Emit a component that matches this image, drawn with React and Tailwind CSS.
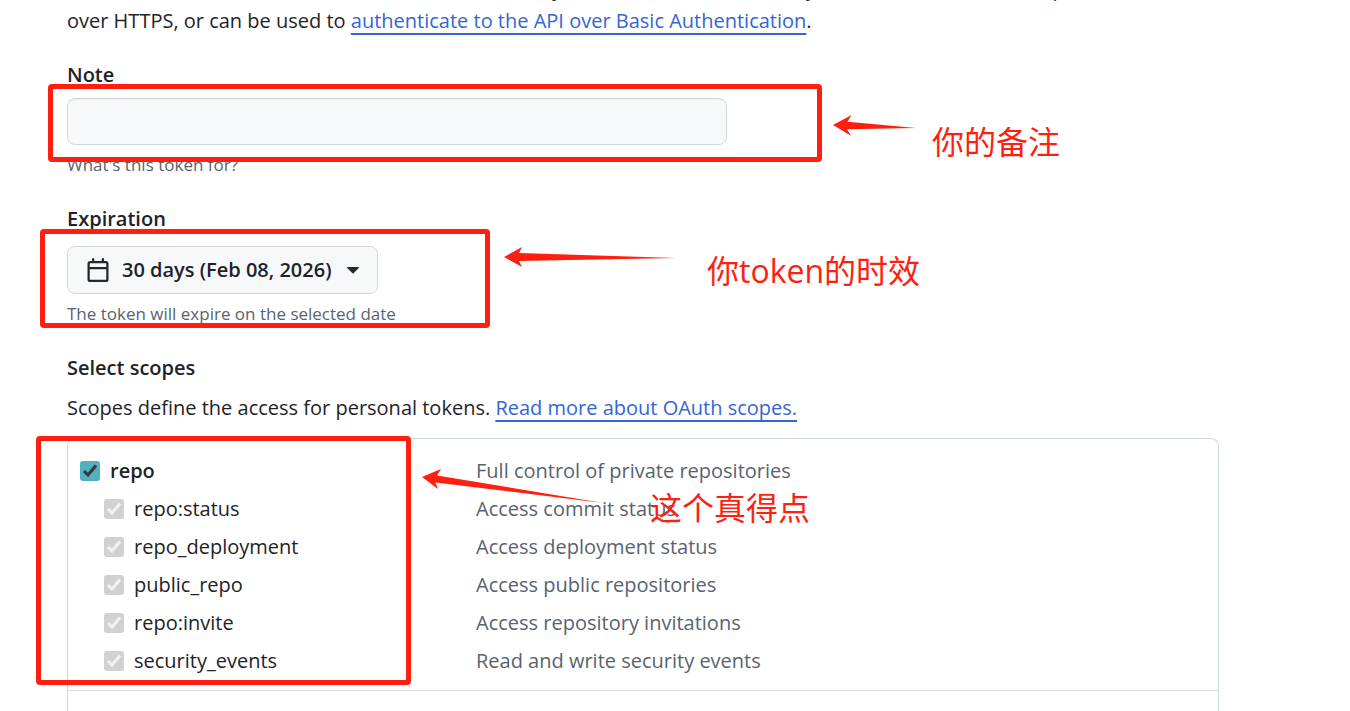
import React from "react";

const CHILD_SCOPES = [
  ["repo:status", "Access commit status"],
  ["repo_deployment", "Access deployment status"],
  ["public_repo", "Access public repositories"],
  ["repo:invite", "Access repository invitations"],
  ["security_events", "Read and write security events"],
];

function CheckBox({ id, disabled }) {
  return (
    <span className="grid size-5 shrink-0 place-items-center">
      <input
        id={id}
        type="checkbox"
        defaultChecked
        disabled={disabled}
        className="col-start-1 row-start-1 size-5 appearance-none rounded-[3px] bg-[#52b1c0] disabled:bg-[#d1d1d1]"
      />
      <svg
        viewBox="0 0 20 20"
        aria-hidden="true"
        className={
          disabled
            ? "pointer-events-none col-start-1 row-start-1 size-5 text-[#f2f2f2]"
            : "pointer-events-none col-start-1 row-start-1 size-5 text-[#393939]"
        }
      >
        <path d="M4 10 8 14 16 4.400" fill="none" stroke="currentColor" strokeWidth="3.100" />
      </svg>
    </span>
  );
}

function ScopeRow({ name, description, child }) {
  return (
    <li className="flex h-[38px] items-center">
      <div className={child ? "flex w-[396px] items-center gap-[10px] pl-6" : "flex w-[396px] items-center gap-[10px]"}>
        <CheckBox id={name} disabled={child} />
        <label htmlFor={name} className={child ? "" : "font-semibold"}>
          {name}
        </label>
      </div>
      <span className="text-[#59636e]">{description}</span>
    </li>
  );
}

function Link({ children }) {
  return (
    <a href="#docs" className="text-[#3465d6] underline decoration-2 underline-offset-[5px] [text-decoration-skip-ink:none]">
      {children}
    </a>
  );
}

function Highlight({ className }) {
  return <div className={"pointer-events-none absolute rounded-[4px] border-[5px] border-[#ff1f10] " + className} />;
}

function Annotation({ className, children }) {
  return (
    <p className={"pointer-events-none absolute text-[32px] leading-10 whitespace-nowrap text-[#ff1f10] " + className}>
      {children}
    </p>
  );
}

export default function App() {
  return (
    <main className="relative flex min-h-screen flex-col overflow-hidden bg-white pr-[131px] pl-[67px] font-['Open_Sans','Noto_Sans_CJK_SC',sans-serif] text-[20px] leading-[30px] text-[#1f2328]">
      <p className="-mt-[27px] leading-8">
        Personal access tokens (classic) function like ordinary OAuth access tokens. They can be used instead of a
        password for Git
        <br />
        over HTTPS, or can be used to <Link>authenticate to the API over Basic Authentication</Link>.
      </p>

      <div className="mt-[23px] flex flex-col items-start">
        <label htmlFor="note" className="font-semibold">
          Note
        </label>
        <input
          id="note"
          type="text"
          className="mt-2 h-[47px] w-[660px] rounded-lg border border-[#d1d9e0] bg-[#f6f8fa] px-4 shadow-[inset_0_1px_0_rgba(31,35,40,0.04)] outline-none"
        />
        <p className="mt-2 text-[17px] leading-6 text-[#59636e]">What's this token for?</p>
      </div>

      <div className="mt-[27px] flex flex-col items-start">
        <label htmlFor="expiration" className="font-semibold">
          Expiration
        </label>
        <button
          id="expiration"
          type="button"
          className="mt-3 flex h-12 items-center rounded-lg border border-[#d1d9e0] bg-[#f6f8fa] px-[18px] font-semibold"
        >
          <svg viewBox="0 0 16 16" aria-hidden="true" className="size-6 fill-[#25292e]">
            <path d="M4.75 0a.75.75 0 0 1 .75.75V2h5V.75a.75.75 0 0 1 1.5 0V2h1.25c.966 0 1.75.784 1.75 1.75v10.5A1.75 1.75 0 0 1 13.25 16H2.75A1.75 1.75 0 0 1 1 14.25V3.75C1 2.784 1.784 2 2.75 2H4V.75A.75.75 0 0 1 4.75 0ZM2.5 7.5v6.75c0 .138.112.25.25.25h10.5a.25.25 0 0 0 .25-.25V7.5Zm10.75-4H2.75a.25.25 0 0 0-.25.25V6h11V3.75a.25.25 0 0 0-.25-.25Z" />
          </svg>
          <span className="ml-3">30 days (Feb 08, 2026)</span>
          <svg viewBox="0 0 12 7" aria-hidden="true" className="ml-[15px] h-[7px] w-3 fill-[#25292e]">
            <path d="M.6 0h10.8c.5 0 .7.6.4.9L6.5 6.2a.7.7 0 0 1-1 0L.2.9C-.1.6.1 0 .6 0Z" />
          </svg>
        </button>
        <p className="mt-2 text-[17px] leading-6 text-[#59636e]">The token will expire on the selected date</p>
      </div>

      <h2 className="mt-[27px] font-semibold">Select scopes</h2>
      <p className="mt-[10px]">
        Scopes define the access for personal tokens. <Link>Read more about OAuth scopes.</Link>
      </p>

      <div className="mt-[15px] flex-1 rounded-t-lg border border-b-0 border-[#d1d9e0]">
        <ul className="border-b border-[#d9dee4] px-3 pt-[13px] pb-[10px]">
          <ScopeRow name="repo" description="Full control of private repositories" />
          {CHILD_SCOPES.map(([name, description]) => (
            <ScopeRow key={name} name={name} description={description} child />
          ))}
        </ul>
      </div>

      <Highlight className="top-[84px] left-[48px] h-[78px] w-[774px]" />
      <Highlight className="top-[229px] left-[40px] h-[99px] w-[450px]" />
      <Highlight className="top-[436px] left-[36px] h-[249px] w-[375px]" />

      <svg
        viewBox="420 110 500 400"
        aria-hidden="true"
        className="pointer-events-none absolute top-[110px] left-[420px] h-[400px] w-[500px] fill-[#ff1f10]"
      >
        <path d="M833 125 851.500 115 847.500 121.700 916 128 847 129.300 851 135.700Z" />
        <path d="M504 257 522 247 519 253 676 258 519 261 522 267Z" />
        <path d="M422 477 441 469 437 475.500 603 503 435.500 482.500 438 489Z" />
      </svg>

      <Annotation className="top-[122px] left-[932px]">你的备注</Annotation>
      <Annotation className="top-[251px] left-[707px]">你token的时效</Annotation>
      <Annotation className="top-[488px] left-[650px]">这个真得点</Annotation>
    </main>
  );
}
